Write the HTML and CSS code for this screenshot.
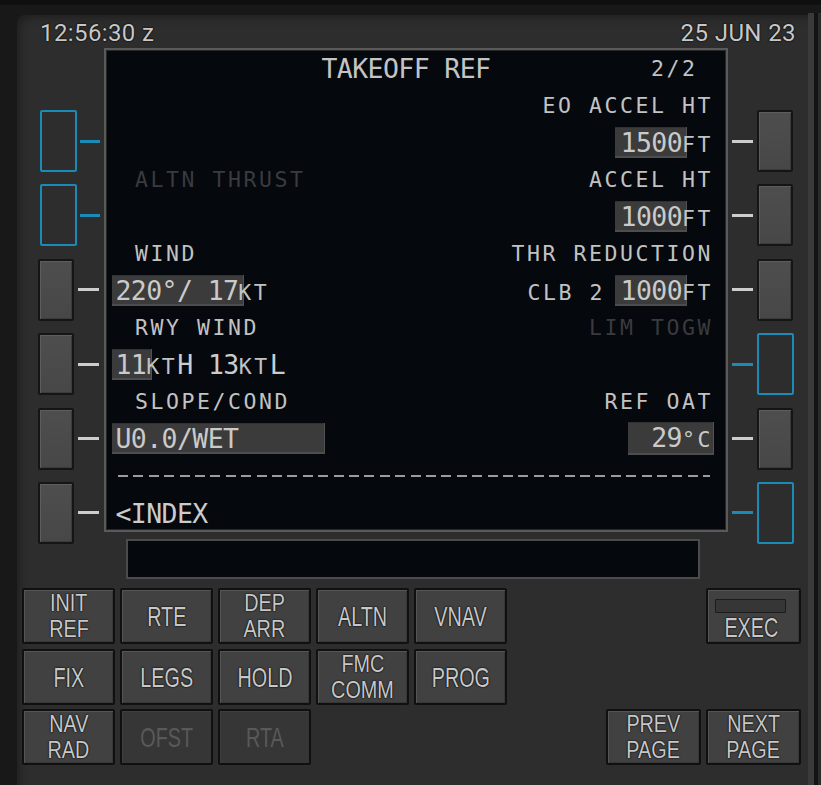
FILE: index.html
```html
<!DOCTYPE html>
<html>
<head>
<meta charset="utf-8">
<title>TAKEOFF REF</title>
<link rel="stylesheet" href="styles.css">
</head>
<body>
<div class="frame">
  <div class="panel">
    <div class="header"><span>12:56:30 z</span><span>25 JUN 23</span></div>
    <div class="middle">
      <div class="lsk-col left">
        <div class="lsk b"><i class="btn"></i><i class="dash"></i></div>
        <div class="lsk b"><i class="btn"></i><i class="dash"></i></div>
        <div class="lsk g"><i class="btn"></i><i class="dash"></i></div>
        <div class="lsk g"><i class="btn"></i><i class="dash"></i></div>
        <div class="lsk g"><i class="btn"></i><i class="dash"></i></div>
        <div class="lsk g"><i class="btn"></i><i class="dash"></i></div>
      </div>
      <div class="center">
        <div class="screen">
          <div class="line"><span class="title">TAKEOFF REF</span><span class="s page">2/2</span></div>
          <div class="line"><span></span><span class="s">EO ACCEL HT</span></div>
          <div class="line"><span></span><span><span class="box">1500</span><span class="s">FT</span></span></div>
          <div class="line"><span class="s ll dim"> ALTN THRUST</span><span class="s">ACCEL HT</span></div>
          <div class="line"><span></span><span><span class="box">1000</span><span class="s">FT</span></span></div>
          <div class="line"><span class="s ll"> WIND</span><span class="s">THR REDUCTION</span></div>
          <div class="line"><span><span class="box l">220°/ 17</span><span class="s">KT</span></span><span><span class="s">CLB 2 </span><span class="box">1000</span><span class="s">FT</span></span></div>
          <div class="line"><span class="s ll"> RWY WIND</span><span class="s dim">LIM TOGW</span></div>
          <div class="line"><span><span class="box l">11</span><span class="s">KT</span>H 13<span class="s">KT</span>L</span><span></span></div>
          <div class="line"><span class="s ll"> SLOPE/COND</span><span class="s">REF OAT</span></div>
          <div class="line"><span><span class="box l wide">U0.0/WET</span></span><span><span class="box oat">29<span class="s">°C</span></span></span></div>
          <div class="line"><i class="dashes"></i></div>
          <div class="line"><span>&lt;INDEX</span><span></span></div>
        </div>
        <div class="scratch"></div>
      </div>
      <div class="lsk-col right">
        <div class="lsk g"><i class="dash"></i><i class="btn"></i></div>
        <div class="lsk g"><i class="dash"></i><i class="btn"></i></div>
        <div class="lsk g"><i class="dash"></i><i class="btn"></i></div>
        <div class="lsk b"><i class="dash"></i><i class="btn"></i></div>
        <div class="lsk g"><i class="dash"></i><i class="btn"></i></div>
        <div class="lsk b"><i class="dash"></i><i class="btn"></i></div>
      </div>
    </div>
    <div class="keys">
      <div class="key r1 c1"><b>INIT</b><b>REF</b></div>
      <div class="key r1 c2 one"><b>RTE</b></div>
      <div class="key r1 c3"><b>DEP</b><b>ARR</b></div>
      <div class="key r1 c4 one"><b>ALTN</b></div>
      <div class="key r1 c5 one"><b>VNAV</b></div>
      <div class="key r1 c8 exec"><i class="lamp"></i><b>EXEC</b></div>
      <div class="key r2 c1 one"><b>FIX</b></div>
      <div class="key r2 c2 one"><b>LEGS</b></div>
      <div class="key r2 c3 one"><b>HOLD</b></div>
      <div class="key r2 c4"><b>FMC</b><b>COMM</b></div>
      <div class="key r2 c5 one"><b>PROG</b></div>
      <div class="key r3 c1"><b>NAV</b><b>RAD</b></div>
      <div class="key r3 c2 one dis"><b>OFST</b></div>
      <div class="key r3 c3 one dis"><b>RTA</b></div>
      <div class="key r3 c7"><b>PREV</b><b>PAGE</b></div>
      <div class="key r3 c8"><b>NEXT</b><b>PAGE</b></div>
    </div>
  </div>
  <div class="edge"><i class="bar"></i><i class="gap"></i><i class="rest"></i></div>
</div>
</body>
</html>
```

FILE: styles.css
```css
* { box-sizing: border-box; }
html, body { margin: 0; padding: 0; }
body {
  width: 821px;
  height: 785px;
  overflow: hidden;
  background: #131313;
  font-family: "Roboto", "Liberation Sans", sans-serif;
}
i { display: block; font-style: normal; }

.frame {
  display: flex;
  height: 785px;
  padding: 15px 0 0 17px;
  background: linear-gradient(#0f0f0f 0 5px, #181818 5px);
}

.panel {
  width: 791px;
  height: 770px;
  background: #2d2d2d;
  border-top-left-radius: 8px;
  box-shadow: inset 7px 7px 10px -5px rgba(0, 0, 0, 0.35);
  display: flex;
  flex-direction: column;
}

.edge { display: flex; margin-top: -2px; }
.edge .bar { width: 6px; background: #3a3a3a; }
.edge .gap { width: 4px; background: #131313; }
.edge .rest { width: 3px; background: #2a2a2a; }

.header {
  height: 33px;
  padding: 3px 12px 0 23px;
  display: flex;
  justify-content: space-between;
  align-items: center;
  font-size: 24px;
  letter-spacing: 0.4px;
  color: #c8c8c8;
  text-shadow: 0 0 2px #000, 0 0 1px #000;
}

.middle { display: flex; height: 540px; }

.lsk-col {
  display: flex;
  flex-direction: column;
  gap: 12.4px;
  padding-top: 62px;
}
.lsk-col.left { width: 87px; padding-left: 21px; }
.lsk-col.right { width: 80px; padding-left: 4px; }

.lsk { height: 62px; display: flex; align-items: center; }
.btn { width: 36px; height: 62px; border-radius: 2px; }
.dash { height: 3px; width: 21px; }

.lsk.g .btn {
  border: 2px solid #151515;
  background: linear-gradient(#4e4e4e, #474747);
  box-shadow: inset 1px 1px 0 #5d5d5d, inset -1px -1px 0 #3b3b3b;
}
.lsk.g .dash { background: #cdcdcd; }
.lsk.b .btn { border: 2px solid #1b8ab6; width: 37px; }
.lsk.b .dash { background: #1b8ab6; }

.left .lsk .dash { margin-left: 4px; }
.left .lsk.b .btn { margin-left: 2px; }
.left .lsk.b .dash { margin-left: 3px; width: 20px; }
.right .lsk .btn { margin-left: 4px; }

.center { width: 624px; }

.screen {
  width: 624px;
  height: 484px;
  border: 2px solid #5a5a5a;
  box-shadow: inset 0 0 0 1px #262626;
  background: #05080d;
  padding: 0 13px 0 9.5px;
  font-family: "DejaVu Sans Mono", "Liberation Mono", monospace;
  color: #cbcbcb;
  overflow: hidden;
}

.line {
  height: 37.05px;
  display: flex;
  justify-content: space-between;
  align-items: center;
  white-space: pre;
  font-size: 26.5px;
  letter-spacing: -0.6px;
}

.s { font-size: 21.5px; letter-spacing: 2.56px; color: #c2c2c2; }
.ll { margin-left: 4px; }
.dim { color: #393b3f; }
.title { padding-left: 206px; color: #c4c4c4; }
.page { margin-right: 15.5px; }

.box {
  display: inline-block;
  line-height: 29px;
  padding: 1px 5px 1px 6px;
  margin: 0 -5px 0 -6px;
  background: #3b3b3b;
  box-shadow: inset 0 -2px 0 #4d4d4d, inset -1px 0 0 #525252, inset 0 1px 0 #313131;
  color: #cacaca;
}
.box .s { color: #cacaca; }
.box.l { padding: 1px 6px 1px 4px; margin: 0 -6px 0 -4px; }
.box.wide { width: 213px; margin-right: 0; }
.box.oat { width: 86px; text-align: right; padding: 1px 1px 1px 0; margin: 0 -1px 0 0; }

.dashes {
  width: 592px;
  height: 2px;
  margin-left: 2.5px;
  background: repeating-linear-gradient(90deg, #9c9c9c 0 10px, transparent 10px 15.4px);
}

.scratch {
  width: 574px;
  height: 40px;
  margin: 7px 0 0 22px;
  border: 2px solid #4b4b4b;
  background: #05080d;
}

.keys {
  display: grid;
  grid-template-columns: repeat(5, 93px) 89px 95px 95px;
  grid-template-rows: 56px 56px 56px;
  gap: 4.5px 5px;
  padding-left: 5px;
}
.r1 { grid-row: 1; }
.r2 { grid-row: 2; }
.r3 { grid-row: 3; }
.c1 { grid-column: 1; }
.c2 { grid-column: 2; }
.c3 { grid-column: 3; }
.c4 { grid-column: 4; }
.c5 { grid-column: 5; }
.c7 { grid-column: 7; }
.c8 { grid-column: 8; }

.key {
  border: 2px solid #101010;
  border-radius: 2px;
  background: #414141;
  box-shadow: inset 1px 1px 0 #555555, inset -1px -1px 0 #373737;
  display: flex;
  flex-direction: column;
  align-items: center;
  justify-content: center;
  color: #c8c8c8;
  font-family: "Liberation Sans", "Roboto", sans-serif;
  text-shadow: 0 0 2px #000, 0 0 1px #000;
}
.key b {
  display: block;
  font-weight: 400;
  font-size: 23px;
  line-height: 26px;
  height: 26px;
  text-align: center;
  transform: scaleX(0.86);
}
.key.one b { transform: scale(0.86, 1.2); }
.key.dis {
  background: #363636;
  box-shadow: inset 1px 1px 0 #3e3e3e;
  color: #595959;
  text-shadow: none;
}
.key.exec { justify-content: flex-start; padding-top: 9px; }
.key.exec .lamp {
  width: 71px;
  height: 14px;
  margin-right: 6px;
  background: #363636;
  border: 1px solid #1c1c1c;
  border-radius: 1px;
}
.key.exec b { margin-top: 1px; margin-right: 4px; transform: scale(0.86, 1.2); }
```
